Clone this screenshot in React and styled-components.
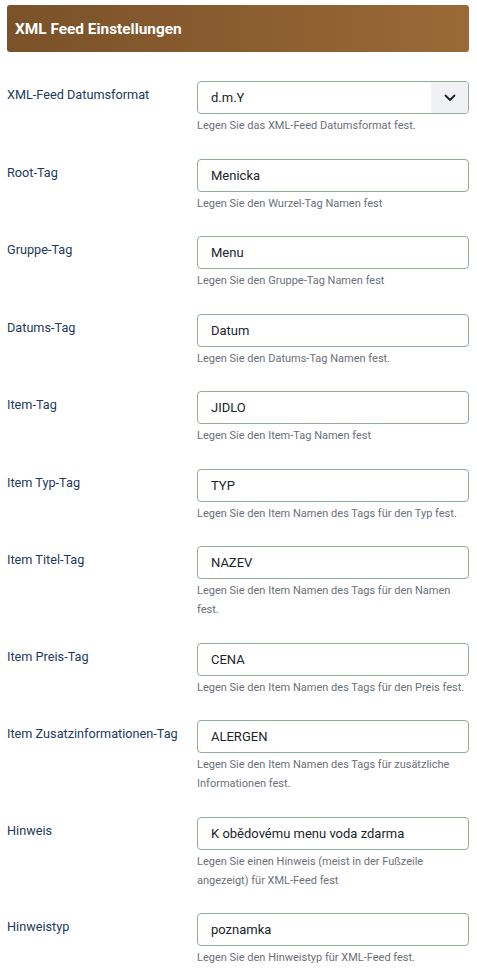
import styled, { createGlobalStyle } from "styled-components";

const fields = [
  { label: "XML-Feed Datumsformat", value: "d.m.Y", help: "Legen Sie das XML-Feed Datumsformat fest.", select: true },
  { label: "Root-Tag", value: "Menicka", help: "Legen Sie den Wurzel-Tag Namen fest" },
  { label: "Gruppe-Tag", value: "Menu", help: "Legen Sie den Gruppe-Tag Namen fest" },
  { label: "Datums-Tag", value: "Datum", help: "Legen Sie den Datums-Tag Namen fest." },
  { label: "Item-Tag", value: "JIDLO", help: "Legen Sie den Item-Tag Namen fest" },
  { label: "Item Typ-Tag", value: "TYP", help: "Legen Sie den Item Namen des Tags für den Typ fest." },
  { label: "Item Titel-Tag", value: "NAZEV", help: "Legen Sie den Item Namen des Tags für den Namen fest." },
  { label: "Item Preis-Tag", value: "CENA", help: "Legen Sie den Item Namen des Tags für den Preis fest." },
  { label: "Item Zusatzinformationen-Tag", value: "ALERGEN", help: "Legen Sie den Item Namen des Tags für zusätzliche Informationen fest." },
  { label: "Hinweis", value: "K obědovému menu voda zdarma", help: "Legen Sie einen Hinweis (meist in der Fußzeile angezeigt) für XML-Feed fest" },
  { label: "Hinweistyp", value: "poznamka", help: "Legen Sie den Hinweistyp für XML-Feed fest." },
];

const App = () => (
  <Page>
    <GlobalStyle />
    <Header>XML Feed Einstellungen</Header>
    <Form>
      {fields.map((f) => (
        <Row key={f.label}>
          <Label>{f.label}</Label>
          <Control>
            <Field>
              <Value>{f.value}</Value>
              {f.select && (
                <Caret>
                  <svg width="12" height="8" viewBox="0 0 12 8">
                    <path d="M1.5 1.5 L6 6 L10.5 1.5" fill="none" stroke="#222" strokeWidth="1.8" strokeLinecap="round" strokeLinejoin="round" />
                  </svg>
                </Caret>
              )}
            </Field>
            <Help>{f.help}</Help>
          </Control>
        </Row>
      ))}
    </Form>
  </Page>
);

export default App;

const GlobalStyle = createGlobalStyle`
  body {
    margin: 0;
    background: #fff;
    font-family: Roboto, "Liberation Sans", sans-serif;
  }
`;

const Page = styled.div`
  padding: 5px 8px 0 7px;
`;

const Header = styled.div`
  height: 47px;
  display: flex;
  align-items: center;
  padding-left: 8px;
  border-radius: 3px;
  background: linear-gradient(90deg, #7a5129 0%, #8a5d2f 50%, #9a6a36 100%);
  color: #fff;
  font-size: 15.4px;
  font-weight: 700;
`;

const Form = styled.div`
  margin-top: 29px;
`;

const Row = styled.div`
  display: grid;
  grid-template-columns: 190px 1fr;
  margin-bottom: 23.5px;
`;

const Label = styled.div`
  padding-top: 5px;
  font-size: 12.7px;
  line-height: 18px;
  color: #223a5c;
`;

const Control = styled.div`
  display: flex;
  flex-direction: column;
`;

const Field = styled.div`
  height: 33px;
  box-sizing: border-box;
  display: flex;
  align-items: center;
  border: 1px solid #8fb096;
  border-radius: 4px;
  overflow: hidden;
  background: #fff;
`;

const Value = styled.div`
  flex: 1;
  padding-left: 13px;
  font-size: 13px;
  color: #212529;
`;

const Caret = styled.div`
  width: 37px;
  align-self: stretch;
  display: flex;
  align-items: center;
  justify-content: center;
  background: #eff1f5;
`;

const Help = styled.div`
  margin-top: 2px;
  font-size: 11px;
  line-height: 19px;
  color: #6b7079;
`;
